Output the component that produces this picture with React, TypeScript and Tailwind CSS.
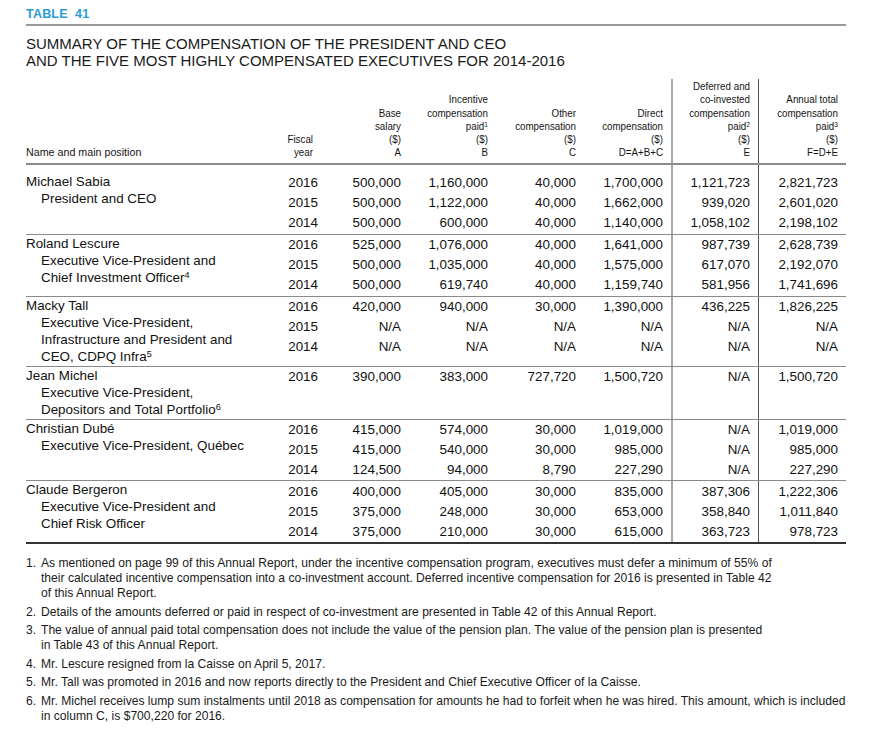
import React from "react";

type Group = {
  name: string;
  lines: React.ReactNode[];
  rows: string[][];
  first?: boolean;
  last?: boolean;
};

const Sup = ({ n }: { n: string }) => (
  <span className="relative -top-[0.4em] text-[0.68em] leading-none">{n}</span>
);

const groups: Group[] = [
  {
    name: "Michael Sabia",
    lines: ["President and CEO"],
    rows: [
      ["2016", "500,000", "1,160,000", "40,000", "1,700,000", "1,121,723", "2,821,723"],
      ["2015", "500,000", "1,122,000", "40,000", "1,662,000", "939,020", "2,601,020"],
      ["2014", "500,000", "600,000", "40,000", "1,140,000", "1,058,102", "2,198,102"],
    ],
    first: true,
  },
  {
    name: "Roland Lescure",
    lines: [
      "Executive Vice-President and",
      <>
        Chief Investment Officer
        <Sup n="4" />
      </>,
    ],
    rows: [
      ["2016", "525,000", "1,076,000", "40,000", "1,641,000", "987,739", "2,628,739"],
      ["2015", "500,000", "1,035,000", "40,000", "1,575,000", "617,070", "2,192,070"],
      ["2014", "500,000", "619,740", "40,000", "1,159,740", "581,956", "1,741,696"],
    ],
  },
  {
    name: "Macky Tall",
    lines: [
      "Executive Vice-President,",
      "Infrastructure and President and",
      <>
        CEO, CDPQ Infra
        <Sup n="5" />
      </>,
    ],
    rows: [
      ["2016", "420,000", "940,000", "30,000", "1,390,000", "436,225", "1,826,225"],
      ["2015", "N/A", "N/A", "N/A", "N/A", "N/A", "N/A"],
      ["2014", "N/A", "N/A", "N/A", "N/A", "N/A", "N/A"],
    ],
  },
  {
    name: "Jean Michel",
    lines: [
      "Executive Vice-President,",
      <>
        Depositors and Total Portfolio
        <Sup n="6" />
      </>,
    ],
    rows: [["2016", "390,000", "383,000", "727,720", "1,500,720", "N/A", "1,500,720"]],
  },
  {
    name: "Christian Dubé",
    lines: ["Executive Vice-President, Québec"],
    rows: [
      ["2016", "415,000", "574,000", "30,000", "1,019,000", "N/A", "1,019,000"],
      ["2015", "415,000", "540,000", "30,000", "985,000", "N/A", "985,000"],
      ["2014", "124,500", "94,000", "8,790", "227,290", "N/A", "227,290"],
    ],
  },
  {
    name: "Claude Bergeron",
    lines: ["Executive Vice-President and", "Chief Risk Officer"],
    rows: [
      ["2016", "400,000", "405,000", "30,000", "835,000", "387,306", "1,222,306"],
      ["2015", "375,000", "248,000", "30,000", "653,000", "358,840", "1,011,840"],
      ["2014", "375,000", "210,000", "30,000", "615,000", "363,723", "978,723"],
    ],
    last: true,
  },
];

const colW = ["w-[52px]", "w-[83px]", "w-[87px]", "w-[88px]", "w-[87px]", "w-[87px]", "w-[88px]"];
const colBorder = ["", "", "", "", "", "border-l-2 border-[#a9a9a9]", "border-l border-[#555]"];

const headers: React.ReactNode[][] = [
  ["Fiscal", "year"],
  ["Base", "salary", "($)", "A"],
  ["Incentive", "compensation", <>paid<Sup n="1" /></>, "($)", "B"],
  ["Other", "compensation", "($)", "C"],
  ["Direct", "compensation", "($)", "D=A+B+C"],
  ["Deferred and", "co-invested", "compensation", <>paid<Sup n="2" /></>, "($)", "E"],
  ["Annual total", "compensation", <>paid<Sup n="3" /></>, "($)", "F=D+E"],
];

const footnotes: React.ReactNode[][] = [
  [
    "As mentioned on page 99 of this Annual Report, under the incentive compensation program, executives must defer a minimum of 55% of",
    "their calculated incentive compensation into a co-investment account. Deferred incentive compensation for 2016 is presented in Table 42",
    "of this Annual Report.",
  ],
  ["Details of the amounts deferred or paid in respect of co-investment are presented in Table 42 of this Annual Report."],
  [
    "The value of annual paid total compensation does not include the value of the pension plan. The value of the pension plan is presented",
    "in Table 43 of this Annual Report.",
  ],
  ["Mr. Lescure resigned from la Caisse on April 5, 2017."],
  ["Mr. Tall was promoted in 2016 and now reports directly to the President and Chief Executive Officer of la Caisse."],
  [
    "Mr. Michel receives lump sum instalments until 2018 as compensation for amounts he had to forfeit when he was hired. This amount, which is included",
    "in column C, is $700,220 for 2016.",
  ],
];

export default function App() {
  return (
    <div
      className="w-[877px] h-[740px] bg-white text-[#111] pl-[26px] pt-[7px] overflow-hidden"
      style={{ fontFamily: '"Liberation Sans", Arial, sans-serif' }}
    >
      <div className="text-[12.5px] leading-[14px] font-bold text-[#2b9bd4] tracking-[0.2px]">
        TABLE&nbsp;&nbsp;41
      </div>
      <div className="w-[820px] h-[2px] bg-[#9a9a9a] mt-[3px]" />
      <div className="mt-[9px] text-[15px] leading-[17px] text-[#1a1a1a]">
        <div>SUMMARY OF THE COMPENSATION OF THE PRESIDENT AND CEO</div>
        <div>AND THE FIVE MOST HIGHLY COMPENSATED EXECUTIVES FOR 2014-2016</div>
      </div>

      {/* Table */}
      <div className="w-[820px] mt-[10px]">
        {/* header */}
        <div className="flex border-b-2 border-[#8c8c8c] text-[11.5px] leading-[13.3px] text-[#151515]">
          <div className="w-[248px] flex flex-col justify-end pb-[3px]">
            <div className="origin-left scale-x-[0.93] whitespace-nowrap">Name and main position</div>
          </div>
          {headers.map((h, i) => (
            <div
              key={i}
              className={`${colW[i]} ${colBorder[i]} flex flex-col justify-end items-stretch text-right pb-[3px] pt-[1px] ${
                i === 0 ? "pr-[13px]" : "pr-[8px]"
              }`}
            >
              {h.map((l, j) => (
                <div key={j} className="origin-right scale-x-[0.85] whitespace-nowrap">
                  {l}
                </div>
              ))}
            </div>
          ))}
        </div>

        {/* body */}
        {groups.map((g, gi) => (
          <div
            key={gi}
            className={`flex text-[13.4px] ${gi > 0 ? "border-t border-[#8a8a8a]" : ""} ${
              g.last ? "border-b-2 border-b-[#333]" : ""
            }`}
          >
            <div className={`w-[248px] leading-[17px] pb-[1px] ${g.first ? "pt-[8px]" : ""}`}>
              <div className="whitespace-nowrap">{g.name}</div>
              {g.lines.map((l, li) => (
                <div key={li} className="pl-[15px] whitespace-nowrap">
                  {l}
                </div>
              ))}
            </div>
            {colW.map((w, ci) => (
              <div key={ci} className={`${w} ${colBorder[ci]} ${g.first ? "pt-[8px]" : ""}`}>
                {g.rows.map((r, ri) => (
                  <div key={ri} className="h-[20.3px] flex items-center justify-end pr-[8px] whitespace-nowrap">
                    {r[ci]}
                  </div>
                ))}
              </div>
            ))}
          </div>
        ))}
      </div>

      {/* footnotes */}
      <div className="mt-[12px] text-[12.1px] leading-[15px] text-[#1a1a1a] flex flex-col gap-[3.5px]">
        {footnotes.map((f, i) => (
          <div key={i} className="flex">
            <div className="w-[15px] shrink-0">{i + 1}.</div>
            <div>
              {f.map((l, j) => (
                <div key={j} className="whitespace-nowrap">
                  {l}
                </div>
              ))}
            </div>
          </div>
        ))}
      </div>
    </div>
  );
}
